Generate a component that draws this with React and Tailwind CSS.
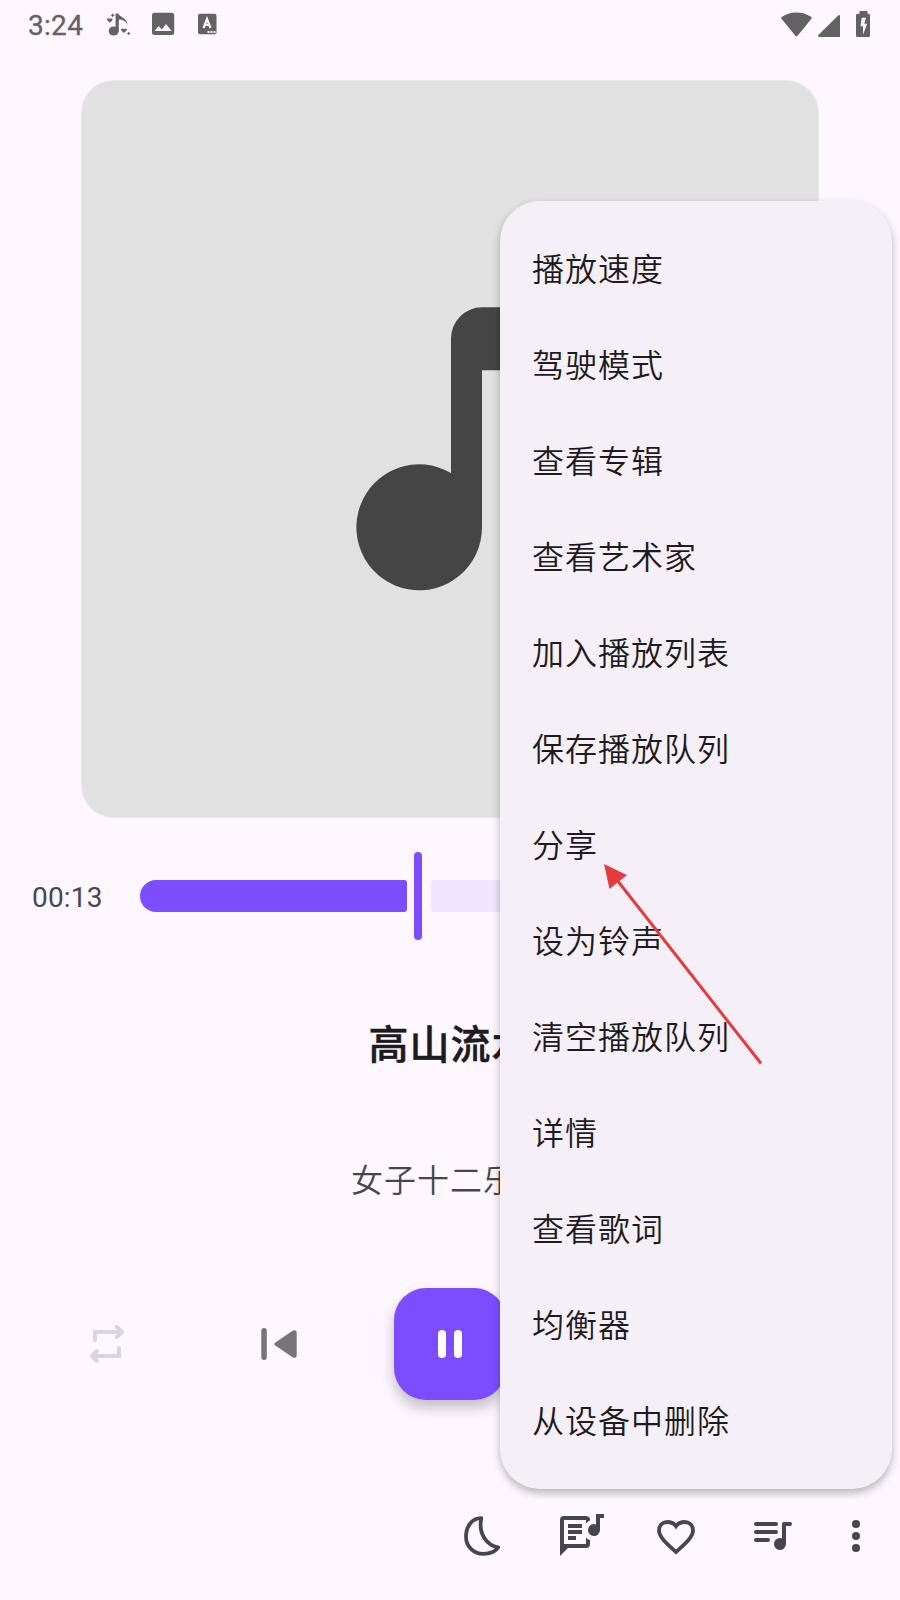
const MENU = ["播放速度", "驾驶模式", "查看专辑", "查看艺术家", "加入播放列表", "保存播放队列", "分享", "设为铃声", "清空播放队列", "详情", "查看歌词", "均衡器", "从设备中删除"];

function StatusBar() {
  return (
    <header className="flex h-12 items-center justify-between pl-7 pr-[29px] text-[#636164]">
      <div className="flex items-center">
        <span className="w-[76px] pt-[3px] text-[28px] leading-8 font-normal tracking-[0.3px] [-webkit-text-stroke:0.3px_#636164]">3:24</span>
        <svg className="h-6 w-7" viewBox="104 12 28 24" fill="currentColor">
          <ellipse cx="113.7" cy="31" rx="5" ry="4.6" />
          <path d="M115.6 13.5h2.6c1 3.6 9.5 4.400 9.200 11.500c-1.500-4-5-5.400-8.600-5.400v11.600h-3.200z" />
          <path d="M109.800 22.700l-2.500-2.500c-1-1.500 1.300-2.800 2.500-1.200c1.200-1.600 3.500-.3 2.500 1.200zM123.900 33.100l-2.600-2.500c-1.200-1.800 1.400-3 2.600-1.300c1.200-1.700 3.800-.5 2.600 1.300z" />
          <path d="M112.700 13l.7 1.500 1.500.7-1.500.7-.7 1.500-.7-1.500-1.500-.7 1.500-.7zM128.700 31.400l.7 1.300 1.400.7-1.400.7-.7 1.300-.7-1.300-1.400-.7 1.400-.7z" />
        </svg>
        <svg className="ml-5 h-6 w-[23px]" viewBox="152 12 23 24" fill="currentColor">
          <path fillRule="evenodd" d="M154.500 12.800h17.200a2.500 2.500 0 0 1 2.500 2.500v17.200a2.500 2.500 0 0 1-2.500 2.500h-17.200a2.500 2.500 0 0 1-2.500-2.500v-17.200a2.500 2.500 0 0 1 2.500-2.500zM154.500 31h17.200l-5.700-7-4.300 5.400-3-3.400z" />
        </svg>
        <svg className="ml-[23px] h-6 w-[19px]" viewBox="198 12 19 24">
          <rect x="198" y="13.700" width="18.500" height="20.500" rx="2" fill="currentColor" />
          <path d="M203.500 28l3.500-9 3.500 9M204.800 25h4.500" fill="none" stroke="#fef7ff" strokeWidth="2.200" />
          <path d="M207.500 31h2v2h-2zM210.500 31h2v2h-2zM213.500 31h2v2h-2z" fill="#fef7ff" />
        </svg>
      </div>
      <svg className="h-7 w-[90px]" viewBox="781 9 90 28" fill="currentColor">
        <path d="M781.300 17.600Q780.900 16.400 782 15.700C790.500 10 802.500 10 811 15.700Q812.100 16.400 811.600 17.600L798 34.300Q796.500 36 795 34.300z" />
        <path d="M840 15v21h-21q-1.700-.6-.6-2L838.400 14.200Q839.600 13.500 840 15z" />
        <path fillRule="evenodd" d="M859.500 10h8v2.700h1q1.500 0 1.500 1.500v20.300q0 1.500-1.500 1.500h-11q-1.500 0-1.500-1.500v-20.300q0-1.500 1.500-1.500h2zM861.700 16.700l-1.200 8.600h2.500v8.500l4.200-11h-2.900l1.800-6.100z" />
      </svg>
    </header>
  );
}

function Artwork() {
  return (
    <div className="mx-auto mt-[33px] flex h-[736px] w-[736px] shrink-0 items-center justify-center rounded-[32px] bg-[#e1e1e1] shadow-[0_0_1px_1px_#ebe6ec]">
      <svg className="h-[736px] w-[736px]" viewBox="82 81 736 736" fill="#454545">
        <path d="M451 473V338.300a31 31 0 0 1 31-31h63v63h-63v157a62.800 63 0 1 1-31-54.300z" />
      </svg>
    </div>
  );
}

function Progress() {
  return (
    <div className="mt-[35px] flex h-[88px] items-center">
      <span className="w-[140px] shrink-0 pt-[4px] pl-8 text-[28px] leading-8 tracking-[0.2px] text-[#49454f]">00:13</span>
      <div className="h-8 w-[267px] rounded-l-2xl rounded-r-[3px] bg-[#7c4dff]" />
      <div className="ml-[7px] h-[88px] w-2 rounded-full bg-[#7c4dff]" />
      <div className="ml-[9px] h-8 w-[329px] rounded-l-[3px] rounded-r-2xl bg-[#f0e7ff]" />
    </div>
  );
}

function Controls() {
  return (
    <div className="mt-[87px] flex h-[112px] items-center">
      <svg className="ml-[90px] h-[38px] w-[34px]" viewBox="90 1325 34 38" fill="none" stroke="#dad4dc" strokeWidth="4" strokeLinecap="round" strokeLinejoin="round">
        <path strokeLinejoin="miter" d="M95 1340v-8h25M119 1348v8H94" />
        <path d="M117 1327l5 5-5 5M97 1351l-5 5 5 5" />
      </svg>
      <svg className="ml-[137px] h-8 w-9" viewBox="261 1328 36 32" fill="#79747a">
        <rect x="261.300" y="1328" width="5.500" height="32" rx="2.700" />
        <path d="M275 1345.300q-1.600-1.300 0-2.600l17.500-12q4.200-1.800 4.200 2.200v22.200q0 4-4.200 2.200z" />
      </svg>
      <button className="ml-[97px] flex h-[112px] w-[112px] items-center justify-center gap-2 rounded-[32px] bg-[#7c4dff] shadow-[0_8px_14px_rgba(0,0,0,0.24)]">
        <span className="h-7 w-2 rounded-full bg-white" />
        <span className="h-7 w-2 rounded-full bg-white" />
      </button>
    </div>
  );
}

function BottomBar() {
  return (
    <footer className="mt-[106px] flex h-[60px] items-center text-[#49454f]">
      <svg className="ml-[464px] h-11 w-9" viewBox="464 1514 36 44" fill="none" stroke="currentColor" strokeWidth="3.800" strokeLinejoin="round">
        <path d="M481.300 1518.200C472 1518 466 1526.500 466 1536.400C466 1547 474 1553.800 483.500 1553.800C490.500 1553.800 495.500 1551 498.200 1547.300C487 1545.500 478 1534 481.300 1518.200z" />
      </svg>
      <svg className="ml-[60px] h-11 w-11" viewBox="560 1514 44 44" fill="currentColor">
        <path d="M560 1556v-36q0-4 4-4h22q3 0 4 2.500v2q-2.500 1-4 3v-3.500h-22v24h22v-6.500q1.500 2 4 2.500v4q0 4-4 4h-18z" />
        <path d="M568 1524h14v4h-14zM568 1530h14v4h-14zM568 1536h8v4h-8zM596 1514h8v4h-4v12a6 6 0 1 1-4-5.600z" />
      </svg>
      <svg className="ml-[53px] h-11 w-10" viewBox="657 1514 40 44" fill="none" stroke="currentColor" strokeWidth="3.800">
        <path d="M676 1552C667 1544 659 1537 659 1530.500C659 1525 663 1522 667.500 1522C671 1522 674 1523.500 676 1526.200C678 1523.500 681 1522 684.500 1522C689 1522 693 1525 693 1530.500C693 1537 685 1544 676 1552z" />
      </svg>
      <svg className="ml-[57px] h-7 w-[38px]" viewBox="754 1524 38 28" fill="currentColor">
        <rect x="754" y="1524" width="24" height="4" rx="2" />
        <rect x="754" y="1532" width="24" height="4" rx="2" />
        <rect x="754" y="1540" width="16" height="4" rx="2" />
        <path d="M784 1524h6a2 2 0 0 1 0 4h-4v18a6 6 0 1 1-4-5.700v-14.300q0-2 2-2z" />
      </svg>
      <svg className="ml-[60px] h-8 w-2" viewBox="0 0 8 32" fill="currentColor">
        <circle cx="4" cy="4" r="4" />
        <circle cx="4" cy="16" r="4" />
        <circle cx="4" cy="28" r="4" />
      </svg>
    </footer>
  );
}

export default function App() {
  return (
    <div className="relative flex h-[1600px] w-[900px] flex-col overflow-hidden bg-[#fef7ff] font-[Roboto,'Noto_Sans_CJK_SC',sans-serif]">
      <StatusBar />
      <Artwork />
      <Progress />
      <h1 className="mt-[82px] pl-px text-center text-[40px] leading-[48px] font-medium tracking-[1px] text-[#1d1b20] [-webkit-text-stroke:0.5px_#1d1b20]">高山流水</h1>
      <p className="mt-[91px] text-center text-[32px] leading-10 font-[350] tracking-[1px] text-[#49454f]">女子十二乐坊</p>
      <Controls />
      <BottomBar />
      <ul className="absolute top-[201px] left-[500px] w-[392px] rounded-[40px] bg-[#f5f0f7] pt-[21px] pb-[19px] shadow-[0_4px_9px_rgba(0,0,0,0.28)]">
        {MENU.map((label) => (
          <li key={label} className="flex h-24 items-center pl-8 text-[32px] leading-10 font-[350] tracking-[1px] text-[#1d1b20]">{label}</li>
        ))}
      </ul>
      <svg className="absolute top-[860px] left-[600px] h-[210px] w-[170px]" viewBox="600 860 170 210">
        <path d="M617 880L761 1063.500" stroke="#e53b3d" strokeWidth="3" />
        <path d="M604 864L627 875L609.500 889z" fill="#e53b3d" />
      </svg>
    </div>
  );
}
